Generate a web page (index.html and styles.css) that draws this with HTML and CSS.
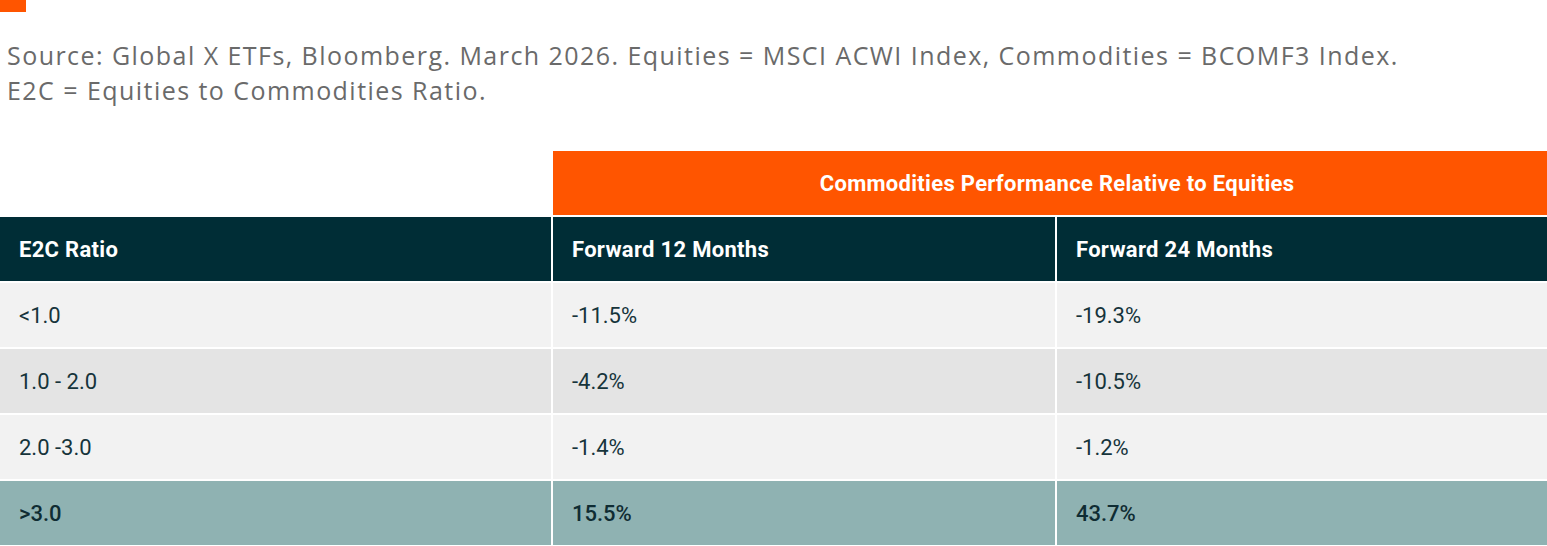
FILE: index.html
```html
<!DOCTYPE html>
<html lang="en">
<head>
<meta charset="utf-8">
<title>E2C Ratio</title>
<link rel="stylesheet" href="styles.css">
</head>
<body>
<div class="page">
  <div class="accent"></div>
  <p class="source">Source: Global X ETFs, Bloomberg. March 2026. Equities = MSCI ACWI Index, Commodities = BCOMF3 Index.<br>E2C = Equities to Commodities Ratio.</p>
  <div class="table">
    <div class="cell blank"></div>
    <div class="cell group">Commodities Performance Relative to Equities</div>

    <div class="cell head">E2C Ratio</div>
    <div class="cell head">Forward 12 Months</div>
    <div class="cell head">Forward 24 Months</div>

    <div class="cell light">&lt;1.0</div>
    <div class="cell light">-11.5%</div>
    <div class="cell light">-19.3%</div>

    <div class="cell mid">1.0 - 2.0</div>
    <div class="cell mid">-4.2%</div>
    <div class="cell mid">-10.5%</div>

    <div class="cell light">2.0 -3.0</div>
    <div class="cell light">-1.4%</div>
    <div class="cell light">-1.2%</div>

    <div class="cell hl">&gt;3.0</div>
    <div class="cell hl">15.5%</div>
    <div class="cell hl">43.7%</div>
  </div>
</div>
</body>
</html>
```
FILE: styles.css
```css
html, body {
  margin: 0;
  padding: 0;
  background: #ffffff;
}
.page {
  width: 1547px;
  height: 546px;
  overflow: hidden;
}
.accent {
  width: 26px;
  height: 12px;
  background: #ff5500;
}
.source {
  margin: 26px 0 0 7px;
  font-family: "Open Sans", Lato, sans-serif;
  font-size: 25px;
  line-height: 35px;
  letter-spacing: 1.45px;
  color: #6a6a6a;
}
.table {
  margin-top: 43px;
  display: grid;
  grid-template-columns: 551px 502px 1fr;
  grid-auto-rows: 64px;
  gap: 2px;
  font-family: Roboto, "Liberation Sans", sans-serif;
  font-size: 22px;
  color: #16343b;
}
.cell {
  display: flex;
  align-items: center;
  padding-left: 19px;
}
.blank {
  background: #ffffff;
}
.group {
  grid-column: 2 / 4;
  justify-content: center;
  padding-left: 14px;
  background: #ff5500;
  color: #ffffff;
  font-weight: 700;
  letter-spacing: 0.3px;
}
.head {
  background: #002d36;
  color: #ffffff;
  font-weight: 700;
  letter-spacing: 0.3px;
}
.light {
  background: #f2f2f2;
}
.mid {
  background: #e4e4e4;
}
.hl {
  background: #8fb2b2;
  font-weight: 500;
  color: #0f2c33;
}
```
